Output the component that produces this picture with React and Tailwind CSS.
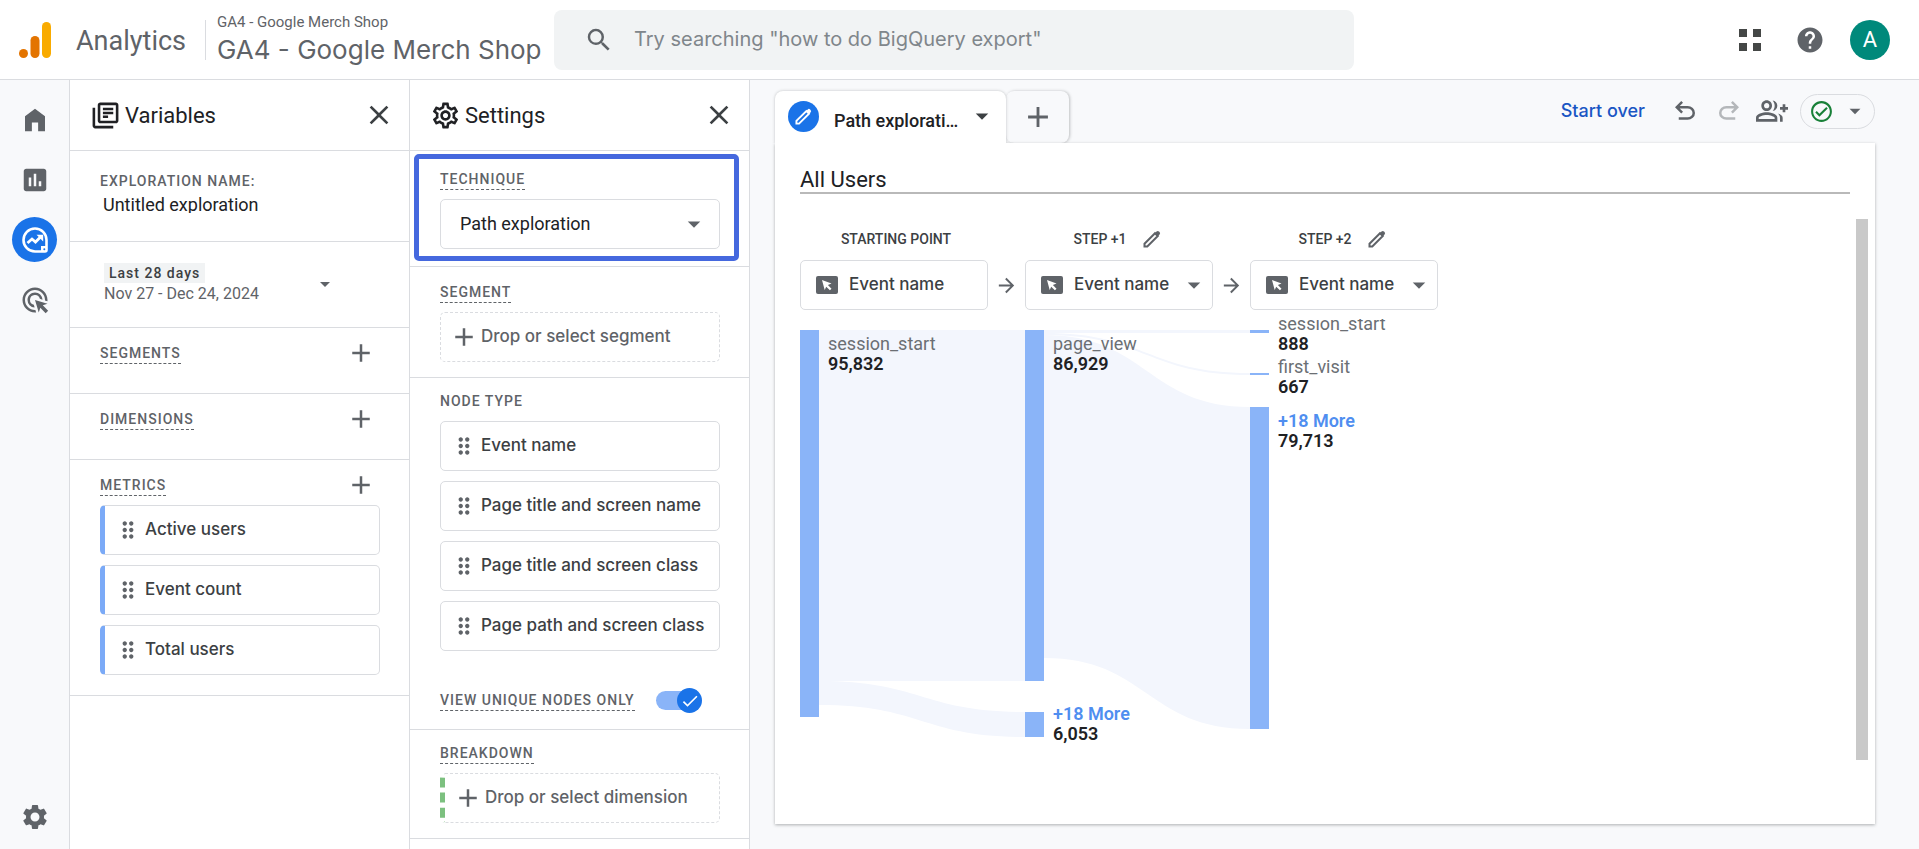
import React, { useState } from 'react';
import {
  MdAdd,
  MdAdsClick,
  MdArrowDropDown,
  MdArrowForward,
  MdAssessment,
  MdCheck,
  MdClose,
  MdDragIndicator,
  MdHelp,
  MdOutlineCheckCircle,
  MdOutlineGroupAdd,
  MdOutlineLibraryBooks,
  MdOutlineSettings,
  MdSearch,
  MdSettings,
} from 'react-icons/md';

const METRICS = ['Active users', 'Event count', 'Total users'];

const NODE_TYPES = [
  'Event name',
  'Page title and screen name',
  'Page title and screen class',
  'Page path and screen class',
];

const STEPS = [
  { title: 'STARTING POINT', editable: false },
  { title: 'STEP +1', editable: true },
  { title: 'STEP +2', editable: true },
];

const NODES = [
  { x: 0, y: 11, h: 387, name: 'session_start', value: '95,832', textY: 31 },
  { x: 225, y: 11, h: 351, name: 'page_view', value: '86,929', textY: 31 },
  { x: 225, y: 393, h: 25, name: '+18 More', value: '6,053', textY: 401, more: true },
  { x: 450, y: 11, h: 3, name: 'session_start', value: '888', textY: 11 },
  { x: 450, y: 54, h: 2, name: 'first_visit', value: '667', textY: 54 },
  { x: 450, y: 88, h: 322, name: '+18 More', value: '79,713', textY: 108, more: true },
];

// from/to are the [top, bottom] edges of a flow on each side
const FLOWS = [
  { x: 19, from: [11, 362], to: [11, 362] },
  { x: 19, from: [362, 386], to: [393, 418] },
  { x: 244, from: [11, 14], to: [11, 14] },
  { x: 244, from: [14, 16], to: [54, 56] },
  { x: 244, from: [16, 339], to: [88, 410] },
];

const flowPath = ({ x, from, to }) => {
  const end = x + 206;
  const mid = x + 103;
  return `M${x} ${from[0]}C${mid} ${from[0]} ${mid} ${to[0]} ${end} ${to[0]}V${to[1]}C${mid} ${to[1]} ${mid} ${from[1]} ${x} ${from[1]}Z`;
};

const LogoIcon = () => (
  <svg width="32" height="36" viewBox="0 0 32 36" aria-hidden="true">
    <rect x="23" y="0" width="9" height="36" rx="4.5" fill="#f9ab00" />
    <rect x="11.5" y="14" width="9" height="22" rx="4.5" fill="#e37400" />
    <circle cx="4.5" cy="31.5" r="4.5" fill="#e37400" />
  </svg>
);

const HomeIcon = () => (
  <svg width="30" height="30" viewBox="0 0 24 24" fill="currentColor" aria-hidden="true">
    <path d="M4 21V9l8-6 8 6v12h-5.5v-7h-5v7z" />
  </svg>
);

const ExploreIcon = () => (
  <svg width="28" height="28" viewBox="0 0 28 28" fill="none" stroke="currentColor" aria-hidden="true">
    <path d="M25.5 14A11.5 11.5 0 1 0 14 25.5h10a1.5 1.5 0 0 0 1.5-1.5z" strokeWidth="2.6" />
    <path d="M20 20h5v5h-5z" fill="currentColor" stroke="none" />
    <circle cx="23.3" cy="23.3" r="1" className="fill-[#1a73e8]" stroke="none" />
    <path d="M6.5 17l4.5-4 3.5 3 5-5" strokeWidth="2.8" />
    <path d="M15.5 8.8h6.7v6.7z" fill="currentColor" stroke="none" />
  </svg>
);

const PencilIcon = ({ size = 18 }) => (
  <svg width={size} height={size} viewBox="0 0 18 18" fill="none" stroke="currentColor" strokeWidth="2" aria-hidden="true">
    <path d="M1.5 16.5v-2.8L12 3.2 14.8 6 4.3 16.5z" />
    <path d="M11.6 3.4l1.9-1.9a1.8 1.8 0 0 1 2.5 0l.5.5a1.8 1.8 0 0 1 0 2.5l-1.9 1.9z" fill="currentColor" stroke="none" />
  </svg>
);

const UndoIcon = ({ className }) => (
  <svg width="30" height="30" viewBox="0 0 24 24" fill="currentColor" className={className} aria-hidden="true">
    <path d="M7 19v-2h7.1q1.575 0 2.738-1T18 13.5t-1.162-2.5T14.1 10H7.8l2.6 2.6L9 14 4 9l5-5 1.4 1.4L7.8 8h6.3q2.425 0 4.163 1.575T20 13.5t-1.737 3.925T14.1 19z" />
  </svg>
);

const AppsIcon = () => (
  <svg width="22" height="22" viewBox="0 0 22 22" fill="currentColor" aria-hidden="true">
    <path d="M0 0h8v8H0zM14 0h8v8h-8zM0 14h8v8H0zM14 14h8v8h-8z" />
  </svg>
);

const EventIcon = () => (
  <svg width="22" height="18" viewBox="0 0 22 18" aria-hidden="true">
    <rect width="22" height="18" rx="2" fill="#5f6368" />
    <path d="M6 4l9.5 3.5-3.6 1.6 3.6 3.6-1.6 1.6-3.7-3.6L8.7 14z" fill="#fff" />
  </svg>
);

const Label = ({ children, plain }) => (
  <h3
    className={`w-fit text-sm leading-5 font-medium tracking-[1px] text-[#5f6368] ${
      plain ? '' : 'border-b border-dashed border-[#5f6368]'
    }`}
  >
    {children}
  </h3>
);

const PanelHeader = ({ icon, title }) => (
  <div className="flex h-[71px] items-center border-b border-[#dadce0] pr-3.5 pl-5">
    {icon}
    <h2 className="ml-1 flex-1 text-[22px] text-[#202124]">{title}</h2>
    <button aria-label={`Close ${title}`} className="text-[#3c4043]">
      <MdClose size={32} />
    </button>
  </div>
);

const Chip = ({ children, accent }) => (
  <button
    className={`flex h-[50px] w-full items-center gap-1 rounded-[5px] border border-[#dadce0] pb-px pl-2.5 text-left font-[Inter,sans-serif] text-[17px] font-medium whitespace-nowrap text-[#3c4043] ${
      accent ? 'border-l-[5px] border-l-[#7baaf7]' : ''
    }`}
  >
    <MdDragIndicator size={26} className="shrink-0 text-[#5f6368]" />
    {children}
  </button>
);

const RailButton = ({ label, children }) => (
  <button aria-label={label} className="flex size-[45px] items-center justify-center text-[#5f6368]">
    {children}
  </button>
);

const AddSection = ({ title, children }) => (
  <section className="border-b border-[#dadce0] pt-2.5">
    <div className="flex h-[30px] items-center justify-between pr-[33px] pl-[30px]">
      <Label>{title}</Label>
      <button aria-label={`Add ${title.toLowerCase()}`} className="text-[#5f6368]">
        <MdAdd size={30} />
      </button>
    </div>
    {children || <div className="h-[25px]" />}
  </section>
);

const Header = () => (
  <header className="flex h-20 items-center border-b border-[#dadce0] bg-white pr-[29px] pl-[19px]">
    <LogoIcon />
    <span className="ml-[25px] w-[129px] pt-1 text-[27px] text-[#5f6368]">Analytics</span>
    <div className="flex h-10 w-[349px] flex-col justify-center border-l border-[#dadce0] pl-[11px] whitespace-nowrap text-[#5f6368]">
      <span className="text-[15px] leading-5">GA4 - Google Merch Shop</span>
      <span className="font-[Inter,sans-serif] text-[26px] leading-9">GA4 - Google Merch Shop</span>
    </div>
    <label className="flex h-[60px] w-[800px] items-center rounded-lg bg-[#f1f3f4] pl-[30px]">
      <MdSearch size={30} className="text-[#5f6368]" />
      <input
        type="search"
        aria-label="Search"
        placeholder='Try searching "how to do BigQuery export"'
        className="ml-5 flex-1 bg-transparent pb-0.5 font-[Inter,sans-serif] text-[20px] outline-none placeholder:text-[#80868b]"
      />
    </label>
    <div className="ml-auto flex items-center">
      <button aria-label="Apps" className="mr-[34px] text-[#444746]">
        <AppsIcon />
      </button>
      <button aria-label="Help" className="mr-[25px] text-[#5f6368]">
        <MdHelp size={30} />
      </button>
      <button className="size-10 rounded-full bg-[#00897b] text-[22px] text-white">A</button>
    </div>
  </header>
);

const Rail = () => (
  <nav className="flex w-[70px] shrink-0 flex-col items-center gap-[15px] border-r border-[#dadce0] bg-[#f8f9fb] pt-[17px] pb-2.5">
    <RailButton label="Home">
      <HomeIcon />
    </RailButton>
    <RailButton label="Reports">
      <MdAssessment size={30} />
    </RailButton>
    <button
      aria-label="Explore"
      className="flex size-[45px] items-center justify-center rounded-full bg-[#1a73e8] text-white"
    >
      <ExploreIcon />
    </button>
    <RailButton label="Advertising">
      <MdAdsClick size={30} />
    </RailButton>
    <div className="mt-auto">
      <RailButton label="Admin">
        <MdSettings size={30} />
      </RailButton>
    </div>
  </nav>
);

const VariablesPanel = () => {
  const [name, setName] = useState('Untitled exploration');

  return (
    <aside className="w-[340px] shrink-0 border-r border-[#dadce0] bg-white">
      <PanelHeader title="Variables" icon={<MdOutlineLibraryBooks size={31} className="text-[#202124]" />} />

      <section className="border-b border-[#dadce0] px-[30px] pt-5 pb-7">
        <label htmlFor="exploration-name" className="block text-sm leading-5 font-medium tracking-[1px] text-[#5f6368]">
          EXPLORATION NAME:
        </label>
        <input
          id="exploration-name"
          value={name}
          onChange={(e) => setName(e.target.value)}
          className="mt-1 ml-[3px] block h-[18px] w-[240px] text-lg leading-[18px] text-[#202124] outline-none"
        />
      </section>

      <section className="border-b border-[#dadce0] px-[34px] pt-[21px] pb-[22px]">
        <button className="flex w-full items-center text-left text-[#5f6368]">
          <span className="w-[209px]">
            <span className="block w-fit bg-[#f1f3f4] px-[5px] text-sm leading-5 font-medium tracking-[1px] text-[#3c4043]">
              Last 28 days
            </span>
            <span className="block text-base leading-[22px]">Nov 27 - Dec 24, 2024</span>
          </span>
          <MdArrowDropDown size={24} />
        </button>
      </section>

      <AddSection title="SEGMENTS" />
      <AddSection title="DIMENSIONS" />
      <AddSection title="METRICS">
        <div className="flex flex-col gap-2.5 pt-[5px] pr-[29px] pb-5 pl-[30px]">
          {METRICS.map((metric) => (
            <Chip key={metric} accent>
              {metric}
            </Chip>
          ))}
        </div>
      </AddSection>
    </aside>
  );
};

const SettingsPanel = () => {
  const [uniqueOnly, setUniqueOnly] = useState(true);

  return (
    <aside className="w-[340px] shrink-0 border-r border-[#dadce0] bg-white">
      <PanelHeader title="Settings" icon={<MdOutlineSettings size={31} className="text-[#202124]" />} />

      <section className="relative border-b border-[#dadce0] pt-[18px] pr-[29px] pb-[17px] pl-[30px]">
        <Label>TECHNIQUE</Label>
        <div className="mt-[9px] grid grid-cols-1 items-center">
          <select
            aria-label="Technique"
            className="col-start-1 row-start-1 h-[50px] w-full appearance-none rounded-[5px] border border-[#dadce0] pl-[19px] text-lg text-[#202124]"
          >
            <option>Path exploration</option>
            <option>Free form</option>
            <option>Funnel exploration</option>
          </select>
          <MdArrowDropDown
            size={30}
            className="pointer-events-none col-start-1 row-start-1 mr-[11px] justify-self-end text-[#5f6368]"
          />
        </div>
        <div className="pointer-events-none absolute top-[3px] right-2.5 bottom-[5px] left-1 rounded-[5px] border-[5px] border-[#4568de]" />
      </section>

      <section className="border-b border-[#dadce0] py-[15px] pr-[29px] pl-[30px]">
        <Label>SEGMENT</Label>
        <button className="mt-[9px] flex h-[50px] w-full items-center rounded-[5px] border border-dashed border-[#dadce0] pl-2 font-[Inter,sans-serif] text-[17px] font-medium text-[#5f6368]">
          <MdAdd size={30} className="mr-0.5" />
          Drop or select segment
        </button>
      </section>

      <section className="border-b border-[#dadce0] pt-[13px] pr-[29px] pb-4 pl-[30px]">
        <Label plain>NODE TYPE</Label>
        <div className="mt-2.5 flex flex-col gap-2.5">
          {NODE_TYPES.map((type) => (
            <Chip key={type}>{type}</Chip>
          ))}
        </div>
        <div className="mt-[37px] flex h-[25px] items-center justify-between pr-[18px]">
          <Label>VIEW UNIQUE NODES ONLY</Label>
          <label className="grid items-center">
            <input
              type="checkbox"
              aria-label="View unique nodes only"
              checked={uniqueOnly}
              onChange={(e) => setUniqueOnly(e.target.checked)}
              className="peer col-start-1 row-start-1 mr-1 h-[19px] w-[42px] appearance-none rounded-full bg-[#bdc1c6] checked:bg-[#8ab4f8]"
            />
            <span className="pointer-events-none col-start-1 row-start-1 flex size-[25px] items-center justify-center rounded-full bg-[#80868b] text-white peer-checked:justify-self-end peer-checked:bg-[#1a73e8]">
              <MdCheck size={20} />
            </span>
          </label>
        </div>
      </section>

      <section className="border-b border-[#dadce0] pt-[13px] pr-[29px] pb-[15px] pl-[30px]">
        <Label>BREAKDOWN</Label>
        <button className="mt-[9px] flex h-[50px] w-full items-center rounded-[5px] border border-l-[5px] border-dashed border-[#dadce0] border-l-[#7cc07f] pl-2 font-[Inter,sans-serif] text-[17px] font-medium text-[#5f6368]">
          <MdAdd size={30} className="mr-0.5" />
          Drop or select dimension
        </button>
      </section>
    </aside>
  );
};

const StepBox = ({ step }) => (
  <div className="w-[188px]">
    <div className="flex h-6 items-center justify-center gap-4 pl-1 text-sm font-medium text-[#3c4043]">
      {step.title}
      {step.editable && (
        <button aria-label={`Edit ${step.title}`} className="pr-2 text-[#5f6368]">
          <PencilIcon />
        </button>
      )}
    </div>
    <div className="mt-[9px] grid grid-cols-1 items-center">
      {step.editable ? (
        <>
          <select
            aria-label={step.title}
            className="col-start-1 row-start-1 h-[50px] w-full appearance-none rounded-[5px] border border-[#dadce0] pl-12 font-[Inter,sans-serif] text-[17px] font-medium text-[#3c4043]"
          >
            {NODE_TYPES.map((type) => (
              <option key={type}>{type}</option>
            ))}
          </select>
          <MdArrowDropDown
            size={30}
            className="pointer-events-none col-start-1 row-start-1 mr-1 justify-self-end text-[#5f6368]"
          />
        </>
      ) : (
        <button className="col-start-1 row-start-1 h-[50px] rounded-[5px] border border-[#dadce0] pl-12 text-left font-[Inter,sans-serif] text-[17px] font-medium text-[#3c4043]">
          Event name
        </button>
      )}
      <div className="pointer-events-none col-start-1 row-start-1 ml-4 w-fit">
        <EventIcon />
      </div>
    </div>
  </div>
);

const PathChart = () => (
  <svg width="640" height="441" viewBox="0 0 640 441" className="mt-[9px] overflow-hidden" role="img" aria-label="Path exploration">
    {FLOWS.map((flow, i) => (
      <path key={i} d={flowPath(flow)} fill="#f3f6fd" />
    ))}
    {NODES.map((node) => (
      <g key={`${node.x}-${node.y}`}>
        <rect x={node.x} y={node.y} width="19" height={node.h} fill="#8ab4f8" />
        <text
          x={node.x + 28}
          y={node.textY}
          className={node.more ? 'fill-[#4f8ef0] text-lg font-semibold' : 'fill-[#6b6f74] text-lg'}
        >
          {node.name}
        </text>
        <text x={node.x + 28} y={node.textY + 20} className="fill-[#202124] text-lg font-semibold">
          {node.value}
        </text>
      </g>
    ))}
  </svg>
);

const Workspace = () => (
  <main className="flex min-w-0 flex-1 flex-col bg-[#f8f9fb] pt-[11px] pr-11 pb-[25px] pl-[25px]">
    <div className="flex h-[52px] items-start">
      <div className="flex h-[52px] w-[231px] items-center rounded-t-lg bg-white pl-[13px] shadow-[0_0_3px_rgba(60,64,67,0.3)] [clip-path:inset(-4px_-4px_0_-4px)]">
        <span className="mb-0.5 flex size-[31px] shrink-0 items-center justify-center rounded-full bg-[#1a73e8] text-white">
          <PencilIcon size={17} />
        </span>
        <span className="mt-2 ml-[15px] w-[126px] truncate text-lg leading-[18px] font-medium text-[#202124]">
          Path exploration
        </span>
        <button aria-label="Tab menu" className="mb-0.5 ml-[7px] text-[#3c4043]">
          <MdArrowDropDown size={30} />
        </button>
      </div>
      <button
        aria-label="Add tab"
        className="flex h-[52px] w-[63px] items-center justify-center rounded-lg text-[#5f6368] shadow-[1px_0_3px_rgba(60,64,67,0.3)]"
      >
        <MdAdd size={34} />
      </button>
      <div className="ml-auto flex h-10 items-center text-[#5f6368]">
        <button className="mr-[25px] font-[Inter,sans-serif] text-lg font-medium text-[#1a56c4]">Start over</button>
        <button aria-label="Undo" className="mr-3.5">
          <UndoIcon />
        </button>
        <button aria-label="Redo" disabled className="mr-3 text-[#b4b7ba]">
          <UndoIcon className="-scale-x-100" />
        </button>
        <button aria-label="Share" className="mr-3">
          <MdOutlineGroupAdd size={32} />
        </button>
        <button
          aria-label="Data quality"
          className="flex h-[35px] w-[75px] items-center justify-between rounded-full border border-[#dadce0] pr-1.5 pl-2"
        >
          <MdOutlineCheckCircle size={25} className="text-[#188038]" />
          <MdArrowDropDown size={26} />
        </button>
      </div>
    </div>

    <div className="flex flex-1 flex-col bg-white pt-[25px] pr-[7px] pl-[25px] shadow-[0_1px_3px_rgba(60,64,67,0.4)]">
      <h1 className="mr-[18px] border-b-2 border-[#b9b9b9] text-[22px] leading-6 text-[#202124]">All Users</h1>
      <div className="flex flex-1">
        <div className="flex-1 pt-[33px]">
          <div className="flex items-end">
            {STEPS.map((step, i) => (
              <React.Fragment key={step.title}>
                {i > 0 && (
                  <div className="flex h-[50px] w-[37px] items-center justify-center text-[#5f6368]">
                    <MdArrowForward size={23} />
                  </div>
                )}
                <StepBox step={step} />
              </React.Fragment>
            ))}
          </div>
          <PathChart />
        </div>
        <div className="mt-[25px] mb-16 w-3 bg-[#c9c9c9]" />
      </div>
    </div>
  </main>
);

export default function App() {
  return (
    <div className="flex min-h-screen flex-col bg-white font-[Roboto,sans-serif]">
      <Header />
      <div className="flex flex-1">
        <Rail />
        <VariablesPanel />
        <SettingsPanel />
        <Workspace />
      </div>
    </div>
  );
}
